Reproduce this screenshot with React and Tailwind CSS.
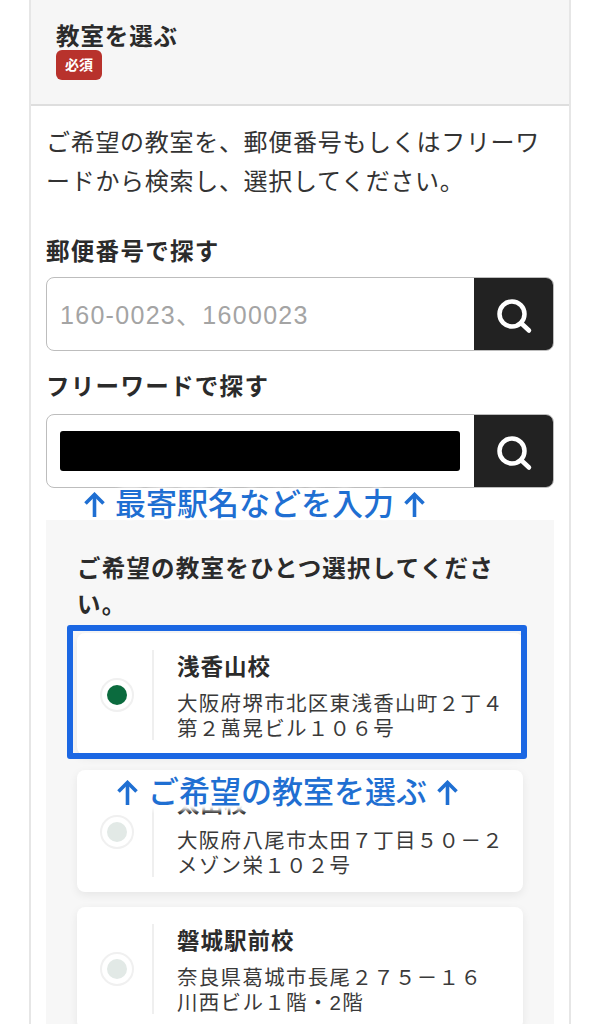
import React from 'react';

const SearchIcon = () => (
  <svg width="40" height="40" viewBox="0 0 40 40" fill="none" stroke="white" strokeLinecap="round">
    <circle cx="18" cy="20" r="12.5" strokeWidth="4.5" />
    <path d="M27 29 L35 36.5" strokeWidth="4.5" />
  </svg>
);

const UpArrow = () => (
  <svg width="21" height="26" viewBox="0 0 21 26" fill="none" stroke="#1f6fd2" strokeWidth="3.6" className="shrink-0">
    <path d="M10.5 25 V3" />
    <path d="M1.5 11.5 L10.5 2.5 L19.5 11.5" />
  </svg>
);

const SearchBox = ({ children }) => (
  <div className="flex h-[74px] overflow-hidden rounded-lg border border-[#bdbdbd] bg-white">
    <div className="flex flex-1 items-center pl-[13px] pr-[14px]">{children}</div>
    <button className="-my-px -mr-px flex w-[80px] items-center justify-center bg-[#222222]">
      <SearchIcon />
    </button>
  </div>
);

const SchoolCard = ({ name, lines, selected }) => (
  <div className="relative flex h-[122px] rounded-lg bg-white pt-[17px] pb-[15px] shadow-[0_3px_10px_rgba(0,0,0,0.07)]">
    <div className="flex w-[77px] shrink-0 items-center border-r-2 border-[#efefef] pl-[23px]">
      <div className="flex h-[34px] w-[34px] items-center justify-center rounded-full border-2 border-[#f0f0f0] bg-white">
        <div className={selected ? 'h-[20px] w-[20px] rounded-full bg-[#0b6b3e]' : 'h-[20px] w-[20px] rounded-full bg-[#e2e9e6]'} />
      </div>
    </div>
    <div className="pt-[1px] pl-[23px]">
      <p className="text-[22.5px] leading-[34px] font-bold tracking-[1px] text-[#2b2b2b]">{name}</p>
      <div className="mt-[6px] text-[20.5px] leading-[25px] tracking-[1.3px] whitespace-nowrap text-[#3a3a3a]">
        {lines.map((line) => (
          <p key={line}>{line}</p>
        ))}
      </div>
    </div>
    {selected && (
      <div className="absolute -top-[8px] -right-[4px] -bottom-[4px] -left-[10px] rounded-[3px] border-[6px] border-[#1b67e3]" />
    )}
  </div>
);

const Note = ({ text, className }) => (
  <div className={`absolute flex items-center gap-[10px] text-[31px] leading-[40px] font-medium whitespace-nowrap text-[#1f6fd2] [text-shadow:0_0_6px_white,0_0_6px_white,0_0_6px_white] ${className}`}>
    <UpArrow />
    <span>{text}</span>
    <UpArrow />
  </div>
);

export default function App() {
  return (
    <div className="relative h-[1024px] w-[600px] overflow-hidden bg-white font-['Liberation_Sans','Noto_Sans_CJK_JP',sans-serif]">
      <div className="mx-[29px] min-h-[1024px] border-x-2 border-[#e6e6e6]">
        <div className="h-[106px] border-b-2 border-[#dedede] bg-[#f6f6f6] pt-[24px] pl-[25px]">
          <h2 className="text-[23.5px] leading-[26px] font-bold tracking-[0.9px] text-[#2b2b2b]">教室を選ぶ</h2>
          <span className="flex h-[30px] w-[46px] items-center justify-center rounded-md bg-[#b8322c] text-[14px] font-bold text-white">必須</span>
        </div>
        <div className="px-[15px] pt-[17px]">
          <p className="text-[24px] leading-[39px] tracking-[0.7px] text-[#333333]">ご希望の教室を、郵便番号もしくはフリーワードから検索し、選択してください。</p>
          <p className="mt-[34px] mb-[8px] text-[23.5px] leading-[34px] font-bold tracking-[1.3px] text-[#2b2b2b]">郵便番号で探す</p>
          <SearchBox>
            <span className="pt-[3px] text-[25px] tracking-[1.3px] text-[#a4a4a4]">160-0023、1600023</span>
          </SearchBox>
          <p className="mt-[19px] mb-[10px] text-[23.5px] leading-[34px] font-bold tracking-[1.3px] text-[#2b2b2b]">フリーワードで探す</p>
          <SearchBox>
            <div className="h-[40px] w-full rounded-[3px] bg-black" />
          </SearchBox>
          <div className="mt-[32px] bg-[#f7f7f7] px-[31px] pt-[31px] pb-[40px]">
            <p className="text-[23.5px] leading-[36px] font-bold tracking-[1.2px] text-[#2b2b2b]">ご希望の教室をひとつ選択してください。</p>
            <div className="mt-[10px] flex flex-col gap-[15px]">
              <SchoolCard selected name="浅香山校" lines={['大阪府堺市北区東浅香山町２丁４', '第２萬晃ビル１０６号']} />
              <SchoolCard name="太田校" lines={['大阪府八尾市太田７丁目５０－２', 'メゾン栄１０２号']} />
              <SchoolCard name="磐城駅前校" lines={['奈良県葛城市長尾２７５－１６', '川西ビル１階・2階']} />
            </div>
          </div>
        </div>
      </div>
      <Note text="最寄駅名などを入力" className="top-[485px] left-[84px]" />
      {/* white band hides most of the second card's name, as in the picture */}
      <div className="absolute top-[774px] left-[110px] h-[36px] w-[360px] bg-white blur-[2px]" />
      <Note text="ご希望の教室を選ぶ" className="top-[773px] left-[117px]" />
    </div>
  );
}
